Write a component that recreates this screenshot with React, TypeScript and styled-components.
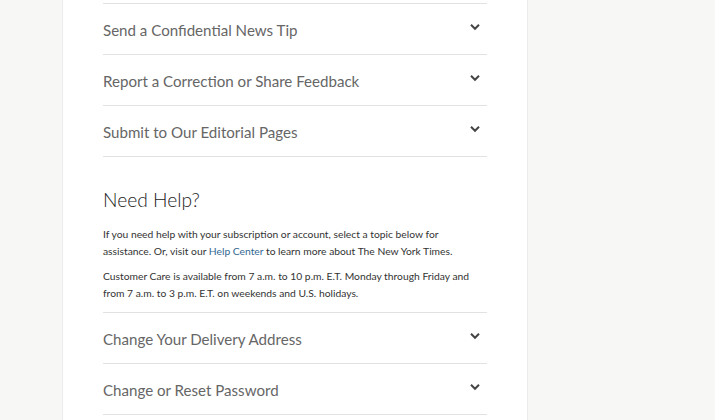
import React from "react";
import styled, { createGlobalStyle } from "styled-components";

const GlobalStyle = createGlobalStyle`
  html, body {
    margin: 0;
    padding: 0;
    background: #f7f7f5;
    font-family: Lato, "Liberation Sans", Arial, sans-serif;
  }
`;

const topics = [
  "Send a Confidential News Tip",
  "Report a Correction or Share Feedback",
  "Submit to Our Editorial Pages",
];

const helpTopics = ["Change Your Delivery Address", "Change or Reset Password"];

const Chevron = () => (
  <svg width="12" height="8" viewBox="0 0 12 8" aria-hidden="true">
    <path d="M2 1.8 L6 5.8 L10 1.8" fill="none" stroke="#444" strokeWidth="2" />
  </svg>
);

export default function App() {
  return (
    <>
      <GlobalStyle />
      <Page>
        <Panel>
          <List>
            {topics.map((t) => (
              <Row key={t}>
                <RowLabel>{t}</RowLabel>
                <Chevron />
              </Row>
            ))}
          </List>
          <Help>
            <Heading>Need Help?</Heading>
            <Para>
              If you need help with your subscription or account, select a topic below for
              assistance. Or, visit our <Link href="#">Help Center</Link> to learn more about The
              New York Times.
            </Para>
            <Para>
              Customer Care is available from 7 a.m. to 10 p.m. E.T. Monday through Friday and
              from 7 a.m. to 3 p.m. E.T. on weekends and U.S. holidays.
            </Para>
          </Help>
          <List>
            {helpTopics.map((t) => (
              <Row key={t}>
                <RowLabel>{t}</RowLabel>
                <Chevron />
              </Row>
            ))}
          </List>
        </Panel>
      </Page>
    </>
  );
}

const Page = styled.div`
  height: 420px;
  overflow: hidden;
  padding-left: 63px;
`;

const Panel = styled.div`
  width: 384px;
  min-height: 420px;
  padding: 3px 40px 0;
  background: #fff;
  border-left: 1px solid #ebebeb;
  border-right: 1px solid #ebebeb;
  box-sizing: content-box;
  margin-left: -1px;
`;

const List = styled.div`
  border-bottom: 1px solid #e2e2e2;
`;

const Row = styled.div`
  display: flex;
  align-items: center;
  justify-content: space-between;
  height: 50px;
  border-top: 1px solid #e2e2e2;
  padding-right: 6px;

  svg {
    margin-top: -5px;
  }
`;

const RowLabel = styled.span`
  font-size: 15.1px;
  color: #666;
  padding-top: 1px;
`;

const Help = styled.div`
  padding: 31px 0 2px;
`;

const Heading = styled.h2`
  margin: 0 0 14px;
  font-size: 19.2px;
  font-weight: 300;
  color: #222;
  line-height: 24px;
`;

const Para = styled.p`
  max-width: 372px;
  margin: 0 0 9px;
  font-size: 10.3px;
  line-height: 16.5px;
  color: #333;
`;

const Link = styled.a`
  color: #326891;
  text-decoration: none;
`;
